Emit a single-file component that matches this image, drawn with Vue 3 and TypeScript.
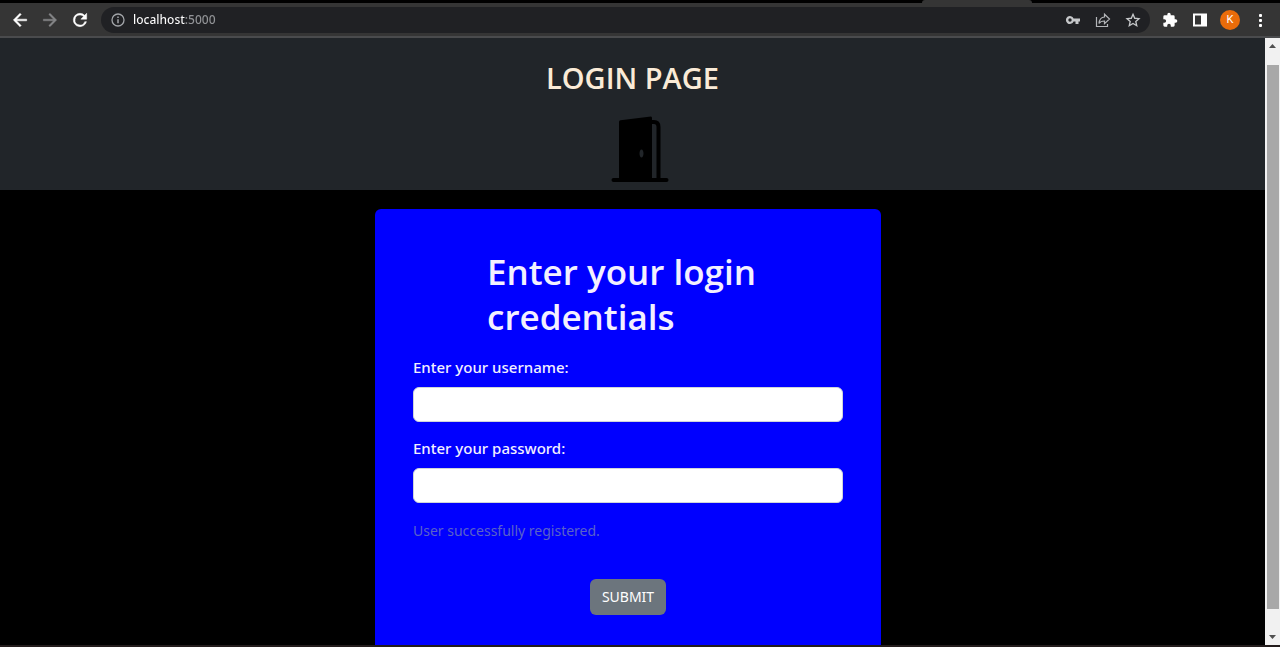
<script setup lang="ts">
import { ref } from 'vue'

const address = ref('localhost:5000')
const username = ref('')
const password = ref('')
const message = ref('User successfully registered.')
</script>

<template>
  <div class="browser">
    <div class="tabs"><span class="active-tab"></span></div>
    <header class="toolbar">
      <nav class="nav">
        <button class="tool" type="button" aria-label="Back">
          <svg viewBox="0 0 24 24"><path d="M20 11H7.830l5.590-5.590L12 4l-8 8 8 8 1.410-1.410L7.830 13H20z" fill="#fff" stroke="#fff" stroke-width=".6" /></svg>
        </button>
        <button class="tool" type="button" aria-label="Forward">
          <svg viewBox="0 0 24 24"><path d="M4 11h12.170l-5.590-5.590L12 4l8 8-8 8-1.410-1.410L16.170 13H4z" fill="#858688" stroke="#858688" stroke-width=".5" /></svg>
        </button>
        <button class="tool" type="button" aria-label="Reload">
          <svg viewBox="0 0 24 24"><path d="M17.650 6.350A7.960 7.960 0 0 0 12 4a8 8 0 1 0 7.730 10h-2.080A6 6 0 1 1 12 6c1.660 0 3.140.69 4.220 1.780L13 11h7V4z" fill="#fff" stroke="#fff" stroke-width=".6" /></svg>
        </button>
      </nav>
      <div class="omnibox">
        <svg class="info" viewBox="0 0 14 14"><circle cx="7" cy="7" r="6" fill="none" stroke="#a2a5a9" stroke-width="1.300" /><path d="M7 6.200v4M7 3.400v1.500" stroke="#a2a5a9" stroke-width="1.500" /></svg>
        <input v-model="address" class="address" type="text" aria-label="Address" />
        <button class="tool" type="button" aria-label="Saved passwords">
          <svg viewBox="0 0 16 16"><path d="M8.600 6.500A4 4 0 1 0 8.600 9.500H10.500V12H13.500V9.500H15V6.500zM5 6.300a1.700 1.700 0 1 1 0 3.400 1.700 1.700 0 0 1 0-3.400z" fill="#c6c8ca" fill-rule="evenodd" /></svg>
        </button>
        <button class="tool" type="button" aria-label="Share">
          <svg viewBox="0 0 16 16" fill="none" stroke="#b4b6b9" stroke-width="1.200"><path d="M1.500 5v9.500h11V12" /><path d="M9.500 5V2.200L14.500 7l-5 4.600V9C7 9 5 9.800 4 11.500 4.300 8 6 5.200 9.500 5z" /></svg>
        </button>
        <button class="tool" type="button" aria-label="Bookmark">
          <svg viewBox="0 0 24 24"><path d="M12 3.500l2.600 5.900 6.400.6-4.800 4.300 1.400 6.300-5.600-3.300-5.600 3.300 1.400-6.300L3 10l6.400-.6z" fill="none" stroke="#c6c8ca" stroke-width="2" /></svg>
        </button>
      </div>
      <div class="actions">
        <button class="tool" type="button" aria-label="Extensions">
          <svg viewBox="0 0 24 24"><path d="M20.500 11H19V7a2 2 0 0 0-2-2h-4V3.500a2.500 2.500 0 0 0-5 0V5H4a2 2 0 0 0-2 2v3.800h1.500a2.700 2.700 0 0 1 0 5.400H2V20a2 2 0 0 0 2 2h3.800v-1.500a2.700 2.700 0 0 1 5.400 0V22H17a2 2 0 0 0 2-2v-4h1.500a2.500 2.500 0 0 0 0-5z" fill="#fff" /></svg>
        </button>
        <button class="tool" type="button" aria-label="Side panel">
          <svg viewBox="0 0 16 16"><path d="M1 1.500h14v13H1zM3 3.500v9h6v-9z" fill="#fff" fill-rule="evenodd" /></svg>
        </button>
        <button class="avatar" type="button" aria-label="Profile K">K</button>
        <button class="tool" type="button" aria-label="Menu">
          <svg viewBox="0 0 16 16" fill="#fff"><rect x="7" y="2" width="3" height="3" rx="1" /><rect x="7" y="7" width="3" height="3" rx="1" /><rect x="7" y="12" width="3" height="3" rx="1" /></svg>
        </button>
      </div>
    </header>

    <div class="viewport">
      <div class="page">
        <div class="banner">
          <h2 class="title">LOGIN PAGE</h2>
          <svg class="door" viewBox="0 0 58 66" aria-hidden="true">
            <path d="M8 5.500Q8 4 9.500 3.800L40 0Q41 0 41 1.500V62H8zM30.500 33c-1.200 0-2 1.800-2 4s.8 4 2 4 2-1.800 2-4-.8-4-2-4z" fill="#000" fill-rule="evenodd" />
            <path d="M40 5.500h3q4.500 0 4.500 5V62" fill="none" stroke="#000" stroke-width="4" />
            <path d="M2.500 63.500h53" stroke="#000" stroke-width="4" stroke-linecap="round" />
          </svg>
        </div>
        <main class="main">
          <form class="card" @submit.prevent>
            <h1 class="heading">Enter your login credentials</h1>
            <div class="field">
              <label for="username">Enter your username:</label>
              <input id="username" v-model="username" type="text" />
            </div>
            <div class="field">
              <label for="password">Enter your password:</label>
              <input id="password" v-model="password" type="password" />
            </div>
            <p class="message">{{ message }}</p>
            <button class="submit" type="submit">SUBMIT</button>
          </form>
        </main>
      </div>
      <div class="scrollbar" aria-hidden="true">
        <svg class="arrow" viewBox="0 0 15 18"><path d="M4 10l3.500-4 3.500 4z" fill="#505050" /></svg>
        <div class="track"><div class="thumb"></div></div>
        <svg class="arrow" viewBox="0 0 15 18"><path d="M4 8l3.500 4L11 8z" fill="#505050" /></svg>
      </div>
    </div>
    <div class="edge"></div>
  </div>
</template>

<style>
body {
  margin: 0;
  background: #000;
}
</style>

<style scoped>
* {
  box-sizing: border-box;
}
.browser {
  display: flex;
  flex-direction: column;
  height: 100vh;
  overflow: hidden;
  font-family: "Noto Sans", "Open Sans", sans-serif;
}
.tabs {
  display: flex;
  justify-content: flex-end;
  flex: none;
  height: 3px;
  padding-right: 248px;
  background: #000;
}
.active-tab {
  width: 110px;
  background: #353535;
  border-radius: 3px 3px 0 0;
}
.toolbar {
  display: flex;
  align-items: center;
  flex: none;
  height: 35px;
  padding: 0 10px;
  background: #353535;
  border-bottom: 2px solid #4a4b4d;
}
.nav {
  display: flex;
  gap: 10px;
  margin-right: 11px;
}
.tool {
  display: grid;
  place-items: center;
  flex: none;
  width: 20px;
  height: 20px;
  padding: 0;
  border: 0;
  background: none;
}
.tool svg {
  display: block;
  width: 20px;
  height: 20px;
}
.omnibox .tool svg,
.actions .tool svg {
  width: 16px;
  height: 16px;
}
.omnibox {
  display: flex;
  align-items: center;
  flex: 1;
  gap: 10px;
  height: 26px;
  padding: 0 7px 0 10px;
  border-radius: 13px;
  background: #202124;
}
.info {
  flex: none;
  width: 14px;
  height: 14px;
}
.address {
  flex: 1;
  min-width: 0;
  height: 20px;
  margin-left: -2px;
  padding: 0;
  border: 0;
  outline: 0;
  font: 500 12px/20px "Noto Sans", "Open Sans", sans-serif;
  color: transparent;
  background: linear-gradient(90deg, #fff 52px, #929497 52px);
  background-clip: text;
  -webkit-background-clip: text;
}
.actions {
  display: flex;
  align-items: center;
  gap: 10px;
  margin-left: 10px;
}
.avatar {
  width: 20px;
  height: 20px;
  padding: 0;
  border: 0;
  border-radius: 50%;
  background: #ea6c0a;
  color: #fff;
  font: 11px/20px Roboto, sans-serif;
}
.viewport {
  display: flex;
  flex: 1;
  min-height: 0;
}
.page {
  flex: 1;
  overflow: hidden;
  background: #000;
}
.banner {
  display: flex;
  flex-direction: column;
  align-items: center;
  gap: 20px;
  padding: 22px 0 7px;
  background: #212529;
}
.title {
  margin: 0;
  font-family: "Open Sans", sans-serif;
  font-size: 29px;
  font-weight: 600;
  line-height: 36px;
  color: antiquewhite;
}
.door {
  width: 58px;
  height: 67px;
  margin-right: -14px;
}
.main {
  display: flex;
  justify-content: center;
  padding-top: 19px;
}
.card {
  width: 40%;
  margin-right: 9px;
  padding: 40px 38px;
  border-radius: 6px;
  background: #00f;
  color: #f3f0ff;
}
.heading {
  margin: 0 74px 17px;
  font-family: "Open Sans", sans-serif;
  font-size: 35px;
  font-weight: 600;
  line-height: 45px;
}
.field {
  margin-bottom: 15px;
}
.field label {
  display: block;
  margin-bottom: 8px;
  font-size: 15px;
  font-weight: 500;
  line-height: 23px;
}
.field input {
  display: block;
  width: 100%;
  height: 35px;
  padding: 6px 12px;
  border: 1px solid #ced4da;
  border-radius: 6px;
  background: #fff;
  font: inherit;
}
.message {
  margin: 0 0 36px;
  font-size: 14px;
  line-height: 25px;
  color: #5a62c8;
}
.submit {
  display: block;
  height: 36px;
  margin: 0 auto;
  padding: 0 12px;
  border: 0;
  border-radius: 6px;
  background: #6c757d;
  color: #fff;
  font: 14px/36px "Noto Sans", "Open Sans", sans-serif;
}
.scrollbar {
  display: flex;
  flex-direction: column;
  flex: none;
  width: 15px;
  background: #f1f1f1;
}
.arrow {
  flex: none;
  width: 15px;
  height: 18px;
}
.track {
  flex: 1;
  padding: 9px 1px 18px 2px;
}
.thumb {
  height: 100%;
  background: #a8a8a8;
}
.edge {
  flex: none;
  height: 2px;
  background: #231c1c;
}
</style>
